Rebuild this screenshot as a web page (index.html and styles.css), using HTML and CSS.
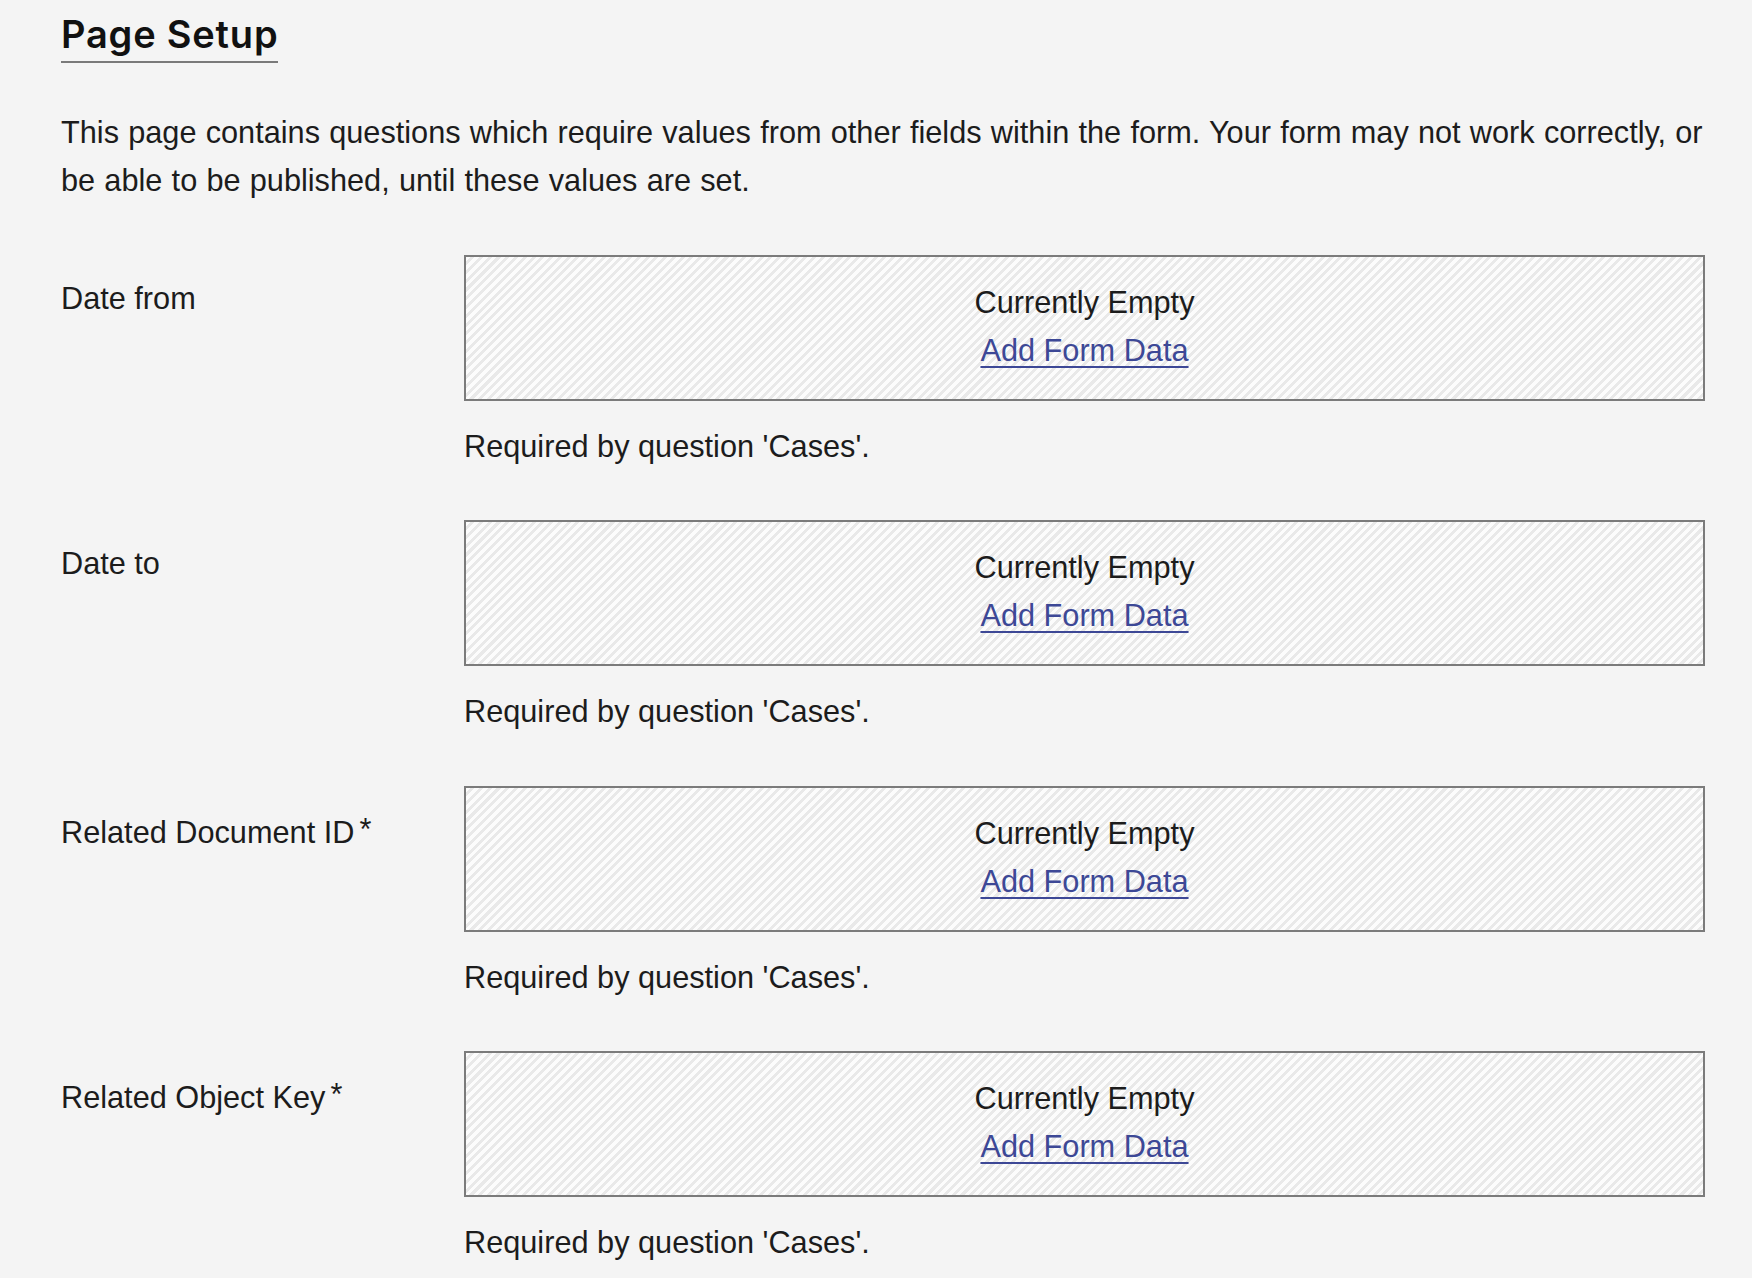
FILE: index.html
```html
<!DOCTYPE html>
<html lang="en">
<head>
<meta charset="utf-8">
<title>Page Setup</title>
<link rel="stylesheet" href="styles.css">
</head>
<body>
<main class="page">
  <h2 class="title">Page Setup</h2>
  <p class="intro">This page contains questions which require values from other fields within the form. Your form may not work correctly, or be able to be published, until these values are set.</p>
  <div class="fields">
    <div class="field">
      <div class="field-label">Date from</div>
      <div class="field-body">
        <div class="empty-box">
          <div class="empty-text">Currently Empty</div>
          <a class="add-link" href="#">Add Form Data</a>
        </div>
        <div class="required-note">Required by question 'Cases'.</div>
      </div>
    </div>
    <div class="field">
      <div class="field-label">Date to</div>
      <div class="field-body">
        <div class="empty-box">
          <div class="empty-text">Currently Empty</div>
          <a class="add-link" href="#">Add Form Data</a>
        </div>
        <div class="required-note">Required by question 'Cases'.</div>
      </div>
    </div>
    <div class="field">
      <div class="field-label">Related Document ID<span class="req">*</span></div>
      <div class="field-body">
        <div class="empty-box">
          <div class="empty-text">Currently Empty</div>
          <a class="add-link" href="#">Add Form Data</a>
        </div>
        <div class="required-note">Required by question 'Cases'.</div>
      </div>
    </div>
    <div class="field">
      <div class="field-label">Related Object Key<span class="req">*</span></div>
      <div class="field-body">
        <div class="empty-box">
          <div class="empty-text">Currently Empty</div>
          <a class="add-link" href="#">Add Form Data</a>
        </div>
        <div class="required-note">Required by question 'Cases'.</div>
      </div>
    </div>
  </div>
</main>
</body>
</html>
```

FILE: styles.css
```css
html, body {
  margin: 0;
  background: #f4f4f4;
}

body {
  font-family: "Liberation Sans", Arial, sans-serif;
  font-size: 30.7px;
  line-height: 48px;
  color: #1c1c1c;
}

.page {
  padding: 12px 0 0 61px;
}

.title {
  display: inline-block;
  margin: 0;
  font-family: Inter, "Liberation Sans", Arial, sans-serif;
  font-size: 38px;
  line-height: 44px;
  font-weight: 600;
  letter-spacing: 0.8px;
  color: #111;
  padding-bottom: 5px;
  border-bottom: 2px solid #7a7a7a;
}

.intro {
  margin: 46px 0 0;
  max-width: 1665px;
  word-spacing: 0.7px;
}

.fields {
  margin-top: 50px;
  display: flex;
  flex-direction: column;
  gap: 49.3px;
}

.field {
  display: grid;
  grid-template-columns: 403px 1241px;
}

.field-label {
  padding-top: 20px;
}

.req {
  margin-left: 5px;
  vertical-align: 3px;
}

.empty-box {
  border: 2px solid #7b7b7b;
  padding: 22px 0 24px;
  text-align: center;
  background: repeating-linear-gradient(135deg, #fcfcfc 0 3.3px, #e9e9e9 3.3px 6.2px);
}

.empty-text {
  color: #1c1c1c;
}

.add-link {
  color: #3d4896;
  text-decoration: underline;
  text-decoration-thickness: 2px;
  text-underline-offset: 5px;
}

.required-note {
  margin-top: 22px;
}
```
